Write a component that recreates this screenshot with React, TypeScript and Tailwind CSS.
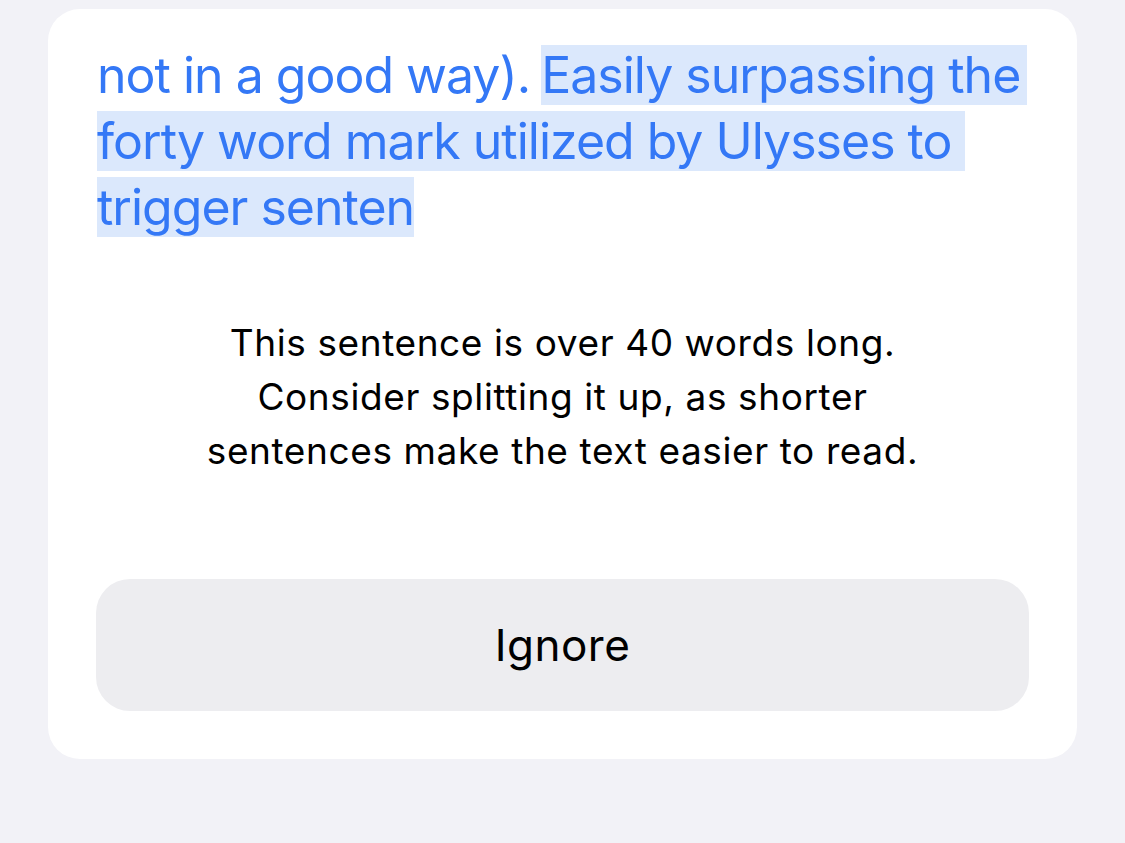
import React from "react";

export default function App() {
  return (
    <div
      className="w-[1125px] h-[843px] bg-[#f2f2f7] overflow-hidden pt-[9px] pl-[48px]"
      style={{ fontFamily: "Inter, 'Noto Sans', sans-serif" }}
    >
      <div className="w-[1029px] h-[750px] bg-white rounded-[32px] px-[48px] pt-[33px] flex flex-col">
        <div className="text-[50px] leading-[66px] tracking-[-1px] text-[#3478f6]">
          <div className="whitespace-pre pl-px">
            not in a good way).<span className="tracking-[-3px]"> </span><span className="bg-[#dbe8fc] pr-[7px]">Easily surpassing the</span>
          </div>
          <div className="whitespace-pre pl-px">
            <span className="bg-[#dbe8fc]">forty word mark utilized by Ulysses to </span>
          </div>
          <div className="whitespace-pre pl-px">
            <span className="bg-[#dbe8fc]">trigger senten</span>
          </div>
        </div>
        <div className="mt-[76px] text-center text-[37px] leading-[54px] tracking-[0.6px] text-black">
          This sentence is over 40 words long.
          <br />
          Consider splitting it up, as shorter
          <br />
          sentences make the text easier to read.
        </div>
        <button className="mt-[101px] h-[132px] w-full rounded-[34px] bg-[#ededf0] text-[44px] tracking-[0.5px] text-black">
          Ignore
        </button>
      </div>
    </div>
  );
}
